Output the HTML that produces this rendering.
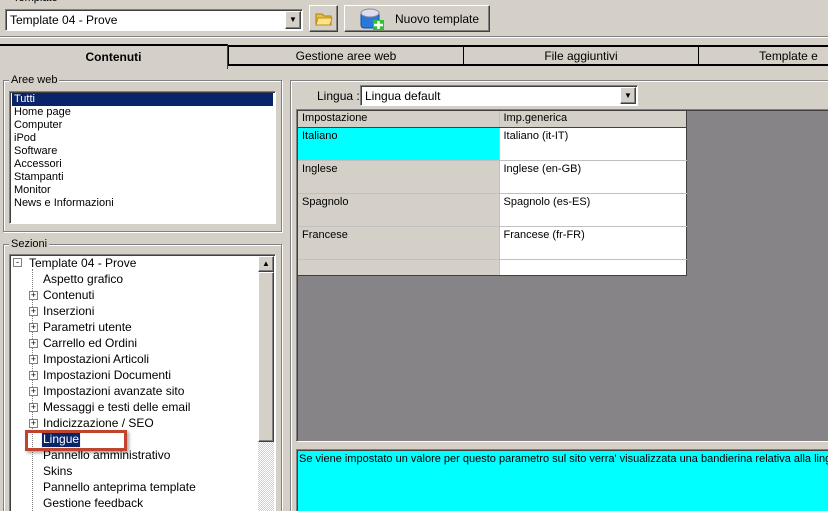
<!DOCTYPE html>
<html style="width:828px;height:511px;overflow:hidden"><head><style>
*{box-sizing:border-box;margin:0;padding:0}
body{width:828px;height:511px;overflow:hidden;background:#d4d0c8;font-family:"Liberation Sans",sans-serif;font-size:11px;color:#000;position:relative}
.a{position:absolute}
.sunk{border-top:1px solid #808080;border-left:1px solid #808080;border-right:1px solid #fff;border-bottom:1px solid #fff;box-shadow:inset 1px 1px 0 #404040}
.raised{border-top:1px solid #fff;border-left:1px solid #fff;border-right:1px solid #404040;border-bottom:1px solid #404040;box-shadow:inset -1px -1px 0 #808080;background:#d4d0c8}
.grp{border:1px solid #808080;box-shadow:1px 1px 0 #fff inset,1px 1px 0 #fff}
.lbl{background:#d4d0c8;padding:0 2px;position:absolute;top:-8px;left:5px;line-height:14px}
.tab{position:absolute;top:45px;height:21px;border-top:2px solid #000;border-left:1px solid #000;border-bottom:2px solid #000;text-align:center;line-height:18px;font-size:12px}
.tr{position:absolute;left:43px;line-height:16px;font-size:12px}
.pl{position:absolute;left:29px;width:9px;height:9px;border:1px solid #808080;background:#fff;font-size:9px;line-height:7px;text-align:center}
td{border-right:1px solid #c0c0c0;border-bottom:1px solid #c0c0c0;vertical-align:top;padding:2px 4px;font-size:11px;height:33px}
</style></head><body>
<div class="a" style="left:13px;top:-8px;line-height:12px">Template</div>
<div class="a sunk" style="left:5px;top:9px;width:298px;height:22px;background:#fff">
 <div class="a" style="left:4px;top:3px;font-size:12px">Template 04 - Prove</div>
 <div class="a raised" style="left:279px;top:1px;width:16px;height:18px;font-size:8px;text-align:center;line-height:16px">▼</div>
</div>
<div class="a raised" style="left:309px;top:5px;width:29px;height:27px">
 <svg class="a" style="left:5px;top:5px" width="18" height="15"><path d="M1 3h6l2 2h7v9H1z" fill="#e8c040" stroke="#a88010"/><path d="M3 7h14l-2 7H1z" fill="#fde38a" stroke="#c09020"/></svg>
</div>
<div class="a raised" style="left:344px;top:5px;width:146px;height:27px">
 <svg class="a" style="left:14px;top:1px" width="26" height="24"><rect x="2" y="5" width="18" height="16" rx="3" fill="#2a78d8" stroke="#1050a0"/><ellipse cx="11" cy="6" rx="9" ry="4" fill="#dde" stroke="#889"/><rect x="14" y="13" width="11" height="10" fill="#30c030"/><path d="M19.5 14v8M15 18h9" stroke="#fff" stroke-width="2.5"/></svg>
 <div class="a" style="left:50px;top:6px;font-size:12px">Nuovo template</div>
</div>
<div class="a" style="left:0;top:36px;width:828px;height:1px;background:#808080"></div>
<div class="a" style="left:0;top:37px;width:828px;height:1px;background:#fff"></div>
<div class="a" style="left:0;top:44px;width:228px;height:25px;border-top:2px solid #000;background:#d4d0c8;text-align:center;line-height:22px;font-weight:bold;font-size:12px;border-right:1px solid #404040">Contenuti</div>
<div class="tab" style="left:228px;width:235px">Gestione aree web</div>
<div class="tab" style="left:463px;width:235px">File aggiuntivi</div>
<div class="tab" style="left:698px;width:140px;padding-left:40px">Template e</div>
<div class="a grp" style="left:3px;top:80px;width:279px;height:152px"><div class="lbl" style="font-size:11px">Aree web</div></div>
<div class="a sunk" style="left:9px;top:91px;width:267px;height:133px;background:#fff;font-size:11px;line-height:13px;padding:1px 2px">
 <div style="background:#0a246a;color:#fff;padding-left:2px">Tutti</div>
 <div style="padding-left:2px">Home page<br>Computer<br>iPod<br>Software<br>Accessori<br>Stampanti<br>Monitor<br>News e Informazioni</div>
</div>
<div class="a grp" style="left:3px;top:244px;width:279px;height:267px;border-bottom:none"><div class="lbl">Sezioni</div></div>
<div class="a sunk" style="left:9px;top:254px;width:267px;height:257px;background:#fff;overflow:hidden;border-bottom:none">
 <div class="a" style="left:248px;top:1px;width:16px;height:270px;background:repeating-conic-gradient(#d4d0c8 0 25%,#fff 0 50%) 0 0/2px 2px"></div>
 <div class="a raised" style="left:248px;top:1px;width:16px;height:16px;font-size:8px;text-align:center;line-height:14px">▲</div>
 <div class="a raised" style="left:248px;top:17px;width:16px;height:170px"></div>
 <div class="a" style="left:22px;top:14px;height:260px;border-left:1px dotted #808080"></div>
</div>
<div class="a" style="left:13px;top:258px;width:9px;height:9px;border:1px solid #808080;background:#fff;font-size:9px;line-height:6px;text-align:center">-</div>
<div class="tr" style="left:29px;top:255px">Template 04 - Prove</div>
<div class="tr" style="top:271px">Aspetto grafico</div>
<div class="tr" style="top:287px">Contenuti</div>
<div class="tr" style="top:303px">Inserzioni</div>
<div class="tr" style="top:319px">Parametri utente</div>
<div class="tr" style="top:335px">Carrello ed Ordini</div>
<div class="tr" style="top:351px">Impostazioni Articoli</div>
<div class="tr" style="top:367px">Impostazioni Documenti</div>
<div class="tr" style="top:383px">Impostazioni avanzate sito</div>
<div class="tr" style="top:399px">Messaggi e testi delle email</div>
<div class="tr" style="top:415px">Indicizzazione / SEO</div>
<div class="tr" style="top:431px;background:#0a246a;color:#fff;padding:0 1px;left:42px;outline:1px dotted #ff0">Lingue</div>
<div class="tr" style="top:447px">Pannello amministrativo</div>
<div class="tr" style="top:463px">Skins</div>
<div class="tr" style="top:479px">Pannello anteprima template</div>
<div class="tr" style="top:495px">Gestione feedback</div>
<div class="pl" style="top:291px">+</div><div class="pl" style="top:307px">+</div><div class="pl" style="top:323px">+</div><div class="pl" style="top:339px">+</div><div class="pl" style="top:355px">+</div><div class="pl" style="top:371px">+</div><div class="pl" style="top:387px">+</div><div class="pl" style="top:403px">+</div><div class="pl" style="top:419px">+</div>
<div class="a" style="left:25px;top:430px;width:102px;height:21px;border:3px solid #c0432d;box-shadow:2px 2px 3px rgba(0,0,0,.35)"></div>
<div class="a grp" style="left:290px;top:80px;width:538px;height:431px;border-bottom:none;border-right:none"></div>
<div class="a" style="left:317px;top:89px;font-size:12px">Lingua :</div>
<div class="a sunk" style="left:360px;top:85px;width:278px;height:21px;background:#fff">
 <div class="a" style="left:4px;top:3px;font-size:12px">Lingua default</div>
 <div class="a raised" style="left:259px;top:1px;width:16px;height:17px;font-size:8px;text-align:center;line-height:15px">▼</div>
</div>
<div class="a sunk" style="left:296px;top:109px;width:532px;height:333px;background:#868487;border-right:none"></div>
<table class="a" style="left:298px;top:111px;border-collapse:collapse;background:#fff;width:389px">
<tr><td style="height:16px;background:#d4d0c8;width:201px;padding:1px 4px;border-bottom:1px solid #404040">Impostazione</td><td style="height:16px;background:#d4d0c8;padding:1px 4px;border-bottom:1px solid #404040;border-right:1px solid #404040">Imp.generica</td></tr>
<tr><td style="background:#0ff">Italiano</td><td style="border-right:1px solid #404040">Italiano (it-IT)</td></tr>
<tr><td style="background:#d4d0c8">Inglese</td><td style="border-right:1px solid #404040">Inglese (en-GB)</td></tr>
<tr><td style="background:#d4d0c8">Spagnolo</td><td style="border-right:1px solid #404040">Spagnolo (es-ES)</td></tr>
<tr><td style="background:#d4d0c8">Francese</td><td style="border-right:1px solid #404040">Francese (fr-FR)</td></tr>
<tr><td style="background:#d4d0c8;height:16px;border-bottom:1px solid #404040"></td><td style="height:16px;border-right:1px solid #404040;border-bottom:1px solid #404040"></td></tr>
</table>
<div class="a sunk" style="left:296px;top:449px;width:532px;height:62px;background:#0ff;border-right:none;border-bottom:none;overflow:hidden">
 <div class="a" style="left:2px;top:3px;white-space:nowrap;font-size:11px">Se viene impostato un valore per questo parametro sul sito verra' visualizzata una bandierina relativa alla lingua</div>
</div>
</body></html>
